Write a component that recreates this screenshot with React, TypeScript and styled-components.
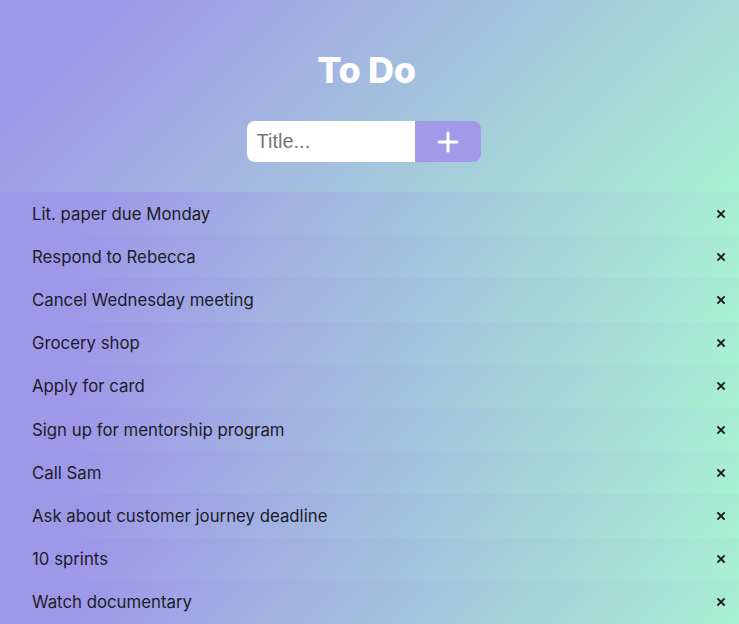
import React, { useState } from "react";
import styled, { createGlobalStyle } from "styled-components";

const PURPLE = "#9f98e8";
const MINT = "#a8f1d2";
const GRADIENT = `linear-gradient(135deg, ${PURPLE} 14%, ${MINT} 100%)`;

const GlobalStyle = createGlobalStyle`
  html, body {
    margin: 0;
    padding: 0;
  }
  body {
    font-family: "Inter", "Noto Sans", sans-serif;
    background: ${PURPLE};
  }
  * { box-sizing: border-box; }
`;

const Page = styled.div`
  min-height: 100vh;
  background: ${GRADIENT};
  display: flex;
  flex-direction: column;
`;

const Header = styled.header`
  display: flex;
  flex-direction: column;
  align-items: center;
  padding: 48px 0 30px;
  background: ${GRADIENT};
`;

const Title = styled.h1`
  margin: 0 6px 29px 0;
  font-family: "Inter", "Noto Sans", sans-serif;
  font-weight: 800;
  font-size: 36px;
  line-height: 44px;
  color: #ffffff;
  letter-spacing: -0.3px;
`;

const Form = styled.form`
  display: flex;
  height: 41px;
  margin-right: 12px;
`;

const Input = styled.input`
  width: 168px;
  height: 100%;
  border: none;
  outline: none;
  border-radius: 8px 0 0 8px;
  padding: 0 10px;
  font-family: "Liberation Sans", Arial, sans-serif;
  font-size: 20px;
  color: #333;
  background: #ffffff;
  &::placeholder {
    color: #757575;
  }
`;

const AddButton = styled.button`
  width: 66px;
  height: 100%;
  border: none;
  border-radius: 0 8px 8px 0;
  background: #a29ae9;
  display: flex;
  align-items: center;
  justify-content: center;
  cursor: pointer;
  padding: 0;
`;

const List = styled.ul`
  list-style: none;
  margin: 0;
  padding: 0;
`;

const Item = styled.li`
  height: 43.2px;
  display: flex;
  align-items: center;
  justify-content: space-between;
  padding: 0 9px 0 32px;
  background: ${GRADIENT};
`;

const ItemText = styled.span`
  font-family: "Inter", "Noto Sans", sans-serif;
  font-size: 16.8px;
  color: #1c1c28;
`;

const DeleteButton = styled.button`
  border: none;
  background: none;
  padding: 0;
  width: 18px;
  height: 18px;
  display: flex;
  align-items: center;
  justify-content: center;
  cursor: pointer;
`;

const items = [
  "Lit. paper due Monday",
  "Respond to Rebecca",
  "Cancel Wednesday meeting",
  "Grocery shop",
  "Apply for card",
  "Sign up for mentorship program",
  "Call Sam",
  "Ask about customer journey deadline",
  "10 sprints",
  "Watch documentary",
];

const PlusIcon = () => (
  <svg width="22" height="22" viewBox="0 0 22 22" aria-hidden="true">
    <path d="M11 2 V20 M2 11 H20" stroke="#ffffff" strokeWidth="3" strokeLinecap="round" />
  </svg>
);

const CloseIcon = () => (
  <svg width="8" height="8" viewBox="0 0 8 8" aria-hidden="true">
    <path d="M1 1 L7 7 M7 1 L1 7" stroke="#1a1a22" strokeWidth="1.8" strokeLinecap="square" />
  </svg>
);

export default function App() {
  const [todos, setTodos] = useState(items);
  const [title, setTitle] = useState("");

  return (
    <>
      <GlobalStyle />
      <Page>
        <Header>
          <Title>To Do</Title>
          <Form
            onSubmit={(e) => {
              e.preventDefault();
              if (title.trim()) {
                setTodos([...todos, title.trim()]);
                setTitle("");
              }
            }}
          >
            <Input
              placeholder="Title..."
              value={title}
              onChange={(e) => setTitle(e.target.value)}
            />
            <AddButton type="submit" aria-label="Add">
              <PlusIcon />
            </AddButton>
          </Form>
        </Header>
        <List>
          {todos.map((t, i) => (
            <Item key={i}>
              <ItemText>{t}</ItemText>
              <DeleteButton
                aria-label="Delete"
                onClick={() => setTodos(todos.filter((_, j) => j !== i))}
              >
                <CloseIcon />
              </DeleteButton>
            </Item>
          ))}
        </List>
      </Page>
    </>
  );
}
